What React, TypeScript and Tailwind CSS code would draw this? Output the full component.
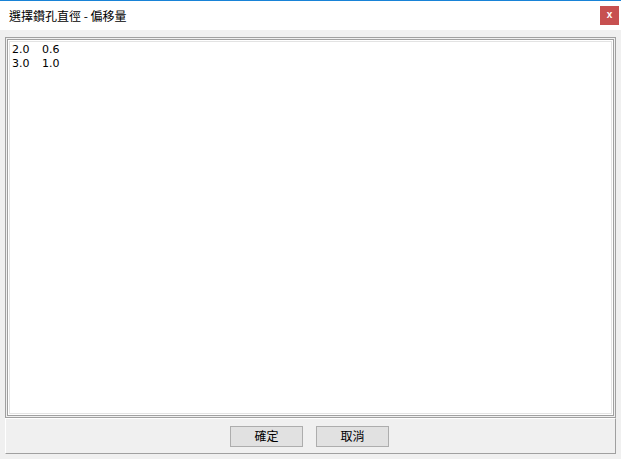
import React from "react";

const rows = [
  ["2.0", "0.6"],
  ["3.0", "1.0"],
];

export default function App() {
  return (
    <div
      className="w-[621px] h-[459px] bg-[#f0f0f0] flex flex-col border-t border-[#1883d7] overflow-hidden"
      style={{ fontFamily: '"Noto Sans CJK TC", "Liberation Sans", sans-serif' }}
    >
      <div className="h-[29px] bg-white flex items-center justify-between pl-[9px] pr-[2px] shrink-0">
        <span className="text-[12px] text-black leading-none">選擇鑽孔直徑 - 偏移量</span>
        <div className="w-[19px] h-[19px] bg-[#c75050] flex items-center justify-center mt-[-1px]">
          <span className="text-white text-[10px] font-bold leading-none" style={{ fontFamily: '"Liberation Sans", sans-serif' }}>x</span>
        </div>
      </div>
      <div className="flex-1 flex flex-col px-[5px] pt-[7px] pb-[5px]">
        <div className="flex-1 border border-[#a0a0a0] p-px bg-[#f0f0f0]">
          <div className="h-full border border-[#a0a0a0] p-px bg-white">
            <div className="h-full border border-[#e3e3e3] bg-white px-[2px] pt-[1px]">
              <div
                className="text-[11px] leading-[14px] text-black"
                style={{ fontFamily: '"DejaVu Sans", sans-serif' }}
              >
                {rows.map((r, i) => (
                  <div key={i} className="flex">
                    <span className="w-[30px]">{r[0]}</span>
                    <span>{r[1]}</span>
                  </div>
                ))}
              </div>
            </div>
          </div>
        </div>
        <div className="h-[36px] shrink-0 border-l border-t border-white border-r border-b border-r-[#a0a0a0] border-b-[#a0a0a0] flex items-center justify-center gap-[13px] pr-[2px]">
          <button className="w-[73px] h-[21px] bg-[#e1e1e1] border border-[#adadad] text-[12px] text-black leading-none">確定</button>
          <button className="w-[73px] h-[21px] bg-[#e1e1e1] border border-[#adadad] text-[12px] text-black leading-none">取消</button>
        </div>
      </div>
    </div>
  );
}
